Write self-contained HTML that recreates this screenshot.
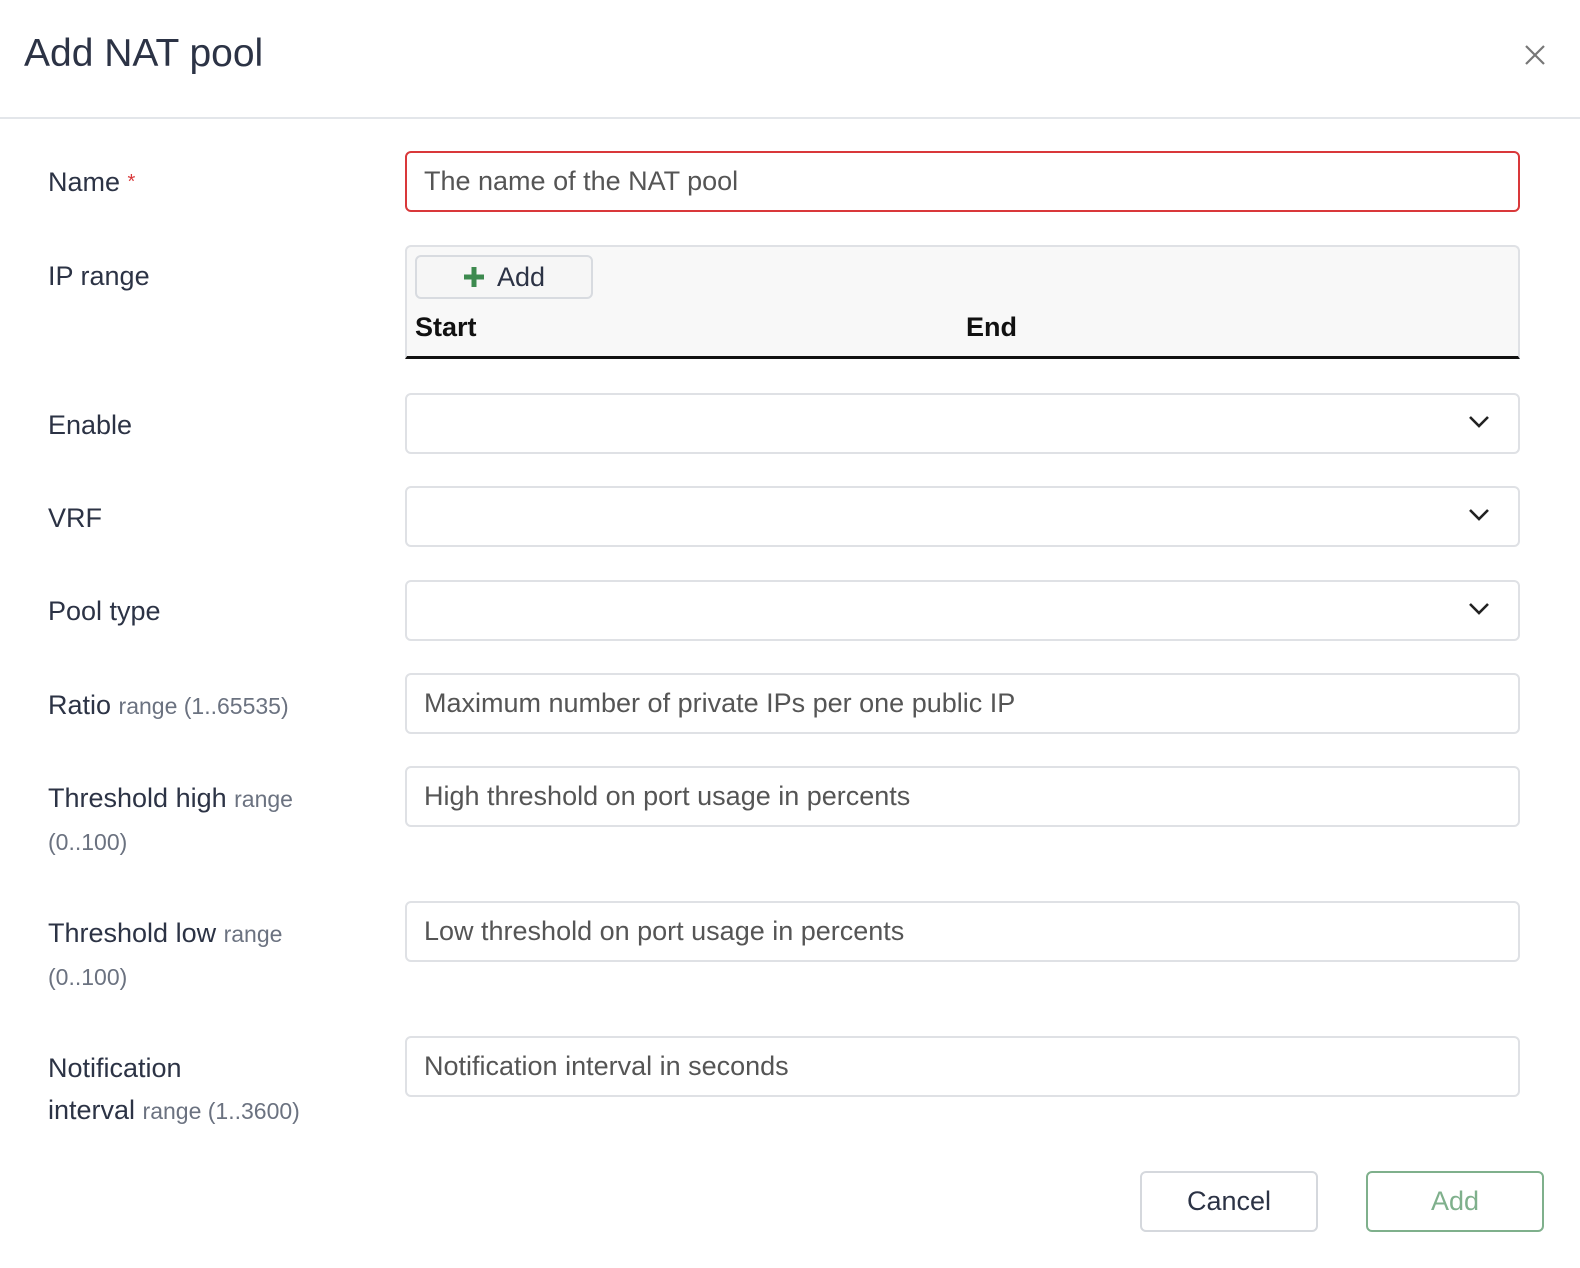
<!DOCTYPE html>
<html><head><meta charset="utf-8"><style>
*{box-sizing:border-box;margin:0;padding:0}
body{width:1580px;height:1268px;background:#fff;font-family:"Liberation Sans",sans-serif;color:#2c3345;position:relative;overflow:hidden}
.a{position:absolute}
.lbl{position:absolute;left:48px;font-size:27px;line-height:42px;color:#2c3345}
.sm{font-size:23px;color:#6b7280}
.inp{position:absolute;left:405px;width:1115px;height:61px;border:2px solid #dfe1e5;border-radius:6px;font-size:27px;color:#555;padding-left:17px;line-height:57px}
.chev{position:absolute;right:28px;top:20px}
.btn{position:absolute;top:1171px;height:61px;width:178px;border-radius:6px;font-size:27px;text-align:center;line-height:57px}
</style></head><body>
<div class="a" style="left:24px;top:32px;font-size:39px;color:#2c3345">Add NAT pool</div>
<svg class="a" style="left:1524px;top:44px" width="22" height="22" viewBox="0 0 22 22"><path d="M2 2L20 20M20 2L2 20" stroke="#777" stroke-width="2.2"/></svg>
<div class="a" style="left:0;top:117px;width:1580px;height:2px;background:#e3e6ea"></div>

<div class="lbl" style="top:161px">Name <span style="color:#d9383a;font-size:20px;vertical-align:top">*</span></div>
<div class="inp" style="top:151px;border-color:#d9383a">The name of the NAT pool</div>

<div class="lbl" style="top:255px">IP range</div>
<div class="a" style="left:405px;top:245px;width:1115px;height:114px;border:2px solid #dfe1e5;border-bottom:3px solid #111;border-radius:6px 6px 0 0;background:#f8f8f8"></div>
<div class="a" style="left:415px;top:255px;width:178px;height:44px;border:2px solid #d8dbe0;border-radius:6px;background:#f6f6f6;font-size:27px;line-height:40px;padding-left:46px;color:#2c3345">
<svg class="a" style="left:46px;top:9px" width="22" height="22" viewBox="0 0 22 22"><path d="M11 1V21M1 11H21" stroke="#3d8a4f" stroke-width="5"/></svg><span style="margin-left:34px">Add</span></div>
<div class="a" style="left:415px;top:312px;font-size:27px;font-weight:bold;color:#111">Start</div>
<div class="a" style="left:966px;top:312px;font-size:27px;font-weight:bold;color:#111">End</div>

<div class="lbl" style="top:404px">Enable</div>
<div class="inp" style="top:393px"><svg class="chev" width="22" height="14" viewBox="0 0 22 14"><path d="M2 2L11 11L20 2" fill="none" stroke="#222" stroke-width="2.6"/></svg></div>
<div class="lbl" style="top:497px">VRF</div>
<div class="inp" style="top:486px"><svg class="chev" width="22" height="14" viewBox="0 0 22 14"><path d="M2 2L11 11L20 2" fill="none" stroke="#222" stroke-width="2.6"/></svg></div>
<div class="lbl" style="top:590px">Pool type</div>
<div class="inp" style="top:580px"><svg class="chev" width="22" height="14" viewBox="0 0 22 14"><path d="M2 2L11 11L20 2" fill="none" stroke="#222" stroke-width="2.6"/></svg></div>

<div class="lbl" style="top:684px">Ratio <span class="sm">range (1..65535)</span></div>
<div class="inp" style="top:673px">Maximum number of private IPs per one public IP</div>

<div class="lbl" style="top:777px;width:300px">Threshold high <span class="sm">range</span><br><span class="sm">(0..100)</span></div>
<div class="inp" style="top:766px">High threshold on port usage in percents</div>

<div class="lbl" style="top:912px;width:300px">Threshold low <span class="sm">range</span><br><span class="sm">(0..100)</span></div>
<div class="inp" style="top:901px">Low threshold on port usage in percents</div>

<div class="lbl" style="top:1047px;width:340px">Notification<br>interval <span class="sm">range (1..3600)</span></div>
<div class="inp" style="top:1036px">Notification interval in seconds</div>

<div class="btn" style="left:1140px;border:2px solid #d5d8dd;color:#2c3345">Cancel</div>
<div class="btn" style="left:1366px;border:2px solid #7fb08c;color:#7fb08c">Add</div>
</body></html>
